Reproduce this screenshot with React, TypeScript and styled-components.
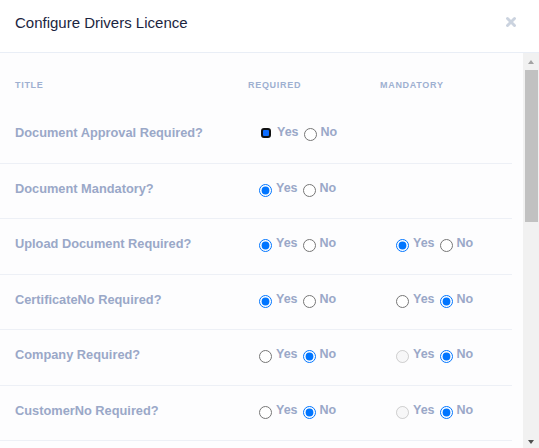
import { createGlobalStyle } from "styled-components";
import styled from "styled-components";
import { X } from "lucide-react";

const GlobalStyle = createGlobalStyle`
  html, body {
    margin: 0;
    padding: 0;
    background: #ffffff;
    font-family: "Liberation Sans", Arial, sans-serif;
  }
`;

const Modal = styled.div`
  height: 448px;
  display: flex;
  flex-direction: column;
  background: #fff;
`;

const Header = styled.div`
  height: 38px;
  flex-shrink: 0;
  display: flex;
  align-items: flex-start;
  justify-content: space-between;
  padding: 14px 21px 0 15px;
  border-bottom: 1px solid #e9eef6;
`;

const Title = styled.h2`
  margin: 0;
  font-size: 15px;
  font-weight: 500;
  color: #1b2540;
`;

const Close = styled.button`
  border: 0;
  background: none;
  padding: 0;
  margin-top: 1px;
  display: flex;
  color: #cbd3df;
  cursor: pointer;
`;

const Body = styled.div`
  flex: 1;
  min-height: 0;
  display: flex;
`;

const ScrollArea = styled.div`
  flex: 1;
  overflow-y: auto;
  scrollbar-width: none;
  background: #fdfdfe;
  padding-bottom: 16px;

  &::-webkit-scrollbar {
    display: none;
  }
`;

const ScrollTrack = styled.div`
  width: 16px;
  flex-shrink: 0;
  display: flex;
  flex-direction: column;
  background: #f1f1f1;
`;

const ScrollButton = styled.div<{ $down?: boolean }>`
  height: 17px;
  flex-shrink: 0;
  display: flex;
  justify-content: center;
  align-items: ${(p) => (p.$down ? "flex-start" : "center")};
  padding-top: ${(p) => (p.$down ? "9px" : "0")};
  box-sizing: border-box;
  margin-top: ${(p) => (p.$down ? "auto" : "0")};
`;

const Arrow = styled.span<{ $down?: boolean }>`
  width: 0;
  height: 0;
  border-left: 3.5px solid transparent;
  border-right: 3.5px solid transparent;
  ${(p) =>
    p.$down
      ? "border-top: 4px solid #505050;"
      : "border-bottom: 4px solid #a3a3a3;"}
`;

const Thumb = styled.div`
  height: 152px;
  margin: 0 1px 0 2px;
  background: #c1c1c1;
`;

const Table = styled.div`
  margin-right: 11px;
`;

const Row = styled.div<{ $head?: boolean }>`
  display: grid;
  grid-template-columns: 233px 132px 1fr;
  padding-left: 15px;
  align-items: ${(p) => (p.$head ? "end" : "center")};
  height: ${(p) => (p.$head ? "55px" : "54.5px")};
  border-bottom: ${(p) => (p.$head ? "0" : "1px solid #edf0f6")};
`;

const HeadCell = styled.div`
  font-size: 9px;
  font-weight: 700;
  letter-spacing: 0.7px;
  color: #9eb0d1;
  padding-bottom: 18px;
`;

const Label = styled.div`
  font-size: 12.8px;
  font-weight: 700;
  color: #9aa8c8;
  margin-top: -5px;
`;

const Group = styled.div<{ $indent: number }>`
  display: flex;
  align-items: flex-start;
  margin-top: -4px;
  padding-left: ${(p) => p.$indent}px;
`;

const Option = styled.label`
  display: inline-flex;
  align-items: flex-start;
  font-size: 12.5px;
  font-weight: 700;
  color: #9aa8c8;
  margin-right: 2px;
`;

const Radio = styled.input<{ $focused?: boolean }>`
  width: 13px;
  height: 13px;
  margin: 3px 4px 0 3px;
  ${(p) =>
    p.$focused &&
    `
    appearance: none;
    width: 10px;
    height: 10px;
    box-sizing: border-box;
    margin: 3px 6px 0 5px;
    border: 2px solid #111;
    border-radius: 3px;
    background: #0b6cff;
    outline: none;
  `}
`;

type Choice = "yes" | "no" | null;

interface IField {
  title: string;
  required: Choice;
  mandatory?: Choice;
  mandatoryLocked?: boolean;
  focused?: boolean;
}

const fields: IField[] = [
  { title: "Document Approval Required?", required: "yes", focused: true },
  { title: "Document Mandatory?", required: "yes" },
  { title: "Upload Document Required?", required: "yes", mandatory: "yes" },
  { title: "CertificateNo Required?", required: "yes", mandatory: "no" },
  { title: "Company Required?", required: "no", mandatory: "no", mandatoryLocked: true },
  { title: "CustomerNo Required?", required: "no", mandatory: "no", mandatoryLocked: true },
  { title: "ExpiryDate Required?", required: "no", mandatory: "no", mandatoryLocked: true },
  { title: "IssueDate Required?", required: "no", mandatory: "no", mandatoryLocked: true },
  { title: "IssuingCountry Required?", required: "no", mandatory: "no", mandatoryLocked: true },
  { title: "LicenceClass Required?", required: "no", mandatory: "no", mandatoryLocked: true },
  { title: "LicenceNo Required?", required: "yes", mandatory: "no" },
  { title: "Notes Required?", required: "no", mandatory: "no", mandatoryLocked: true },
  { title: "Reference Required?", required: "no", mandatory: "no", mandatoryLocked: true },
  { title: "Status Required?", required: "no", mandatory: "no", mandatoryLocked: true },
  { title: "ValidFrom Required?", required: "no", mandatory: "no", mandatoryLocked: true },
  { title: "ValidTo Required?", required: "no", mandatory: "no", mandatoryLocked: true },
];

const YesNo = ({
  name,
  value,
  indent,
  lockYes,
  focused,
}: {
  name: string;
  value: Choice;
  indent: number;
  lockYes?: boolean;
  focused?: boolean;
}) => (
  <Group $indent={indent}>
    <Option>
      <Radio
        type="radio"
        name={name}
        defaultChecked={value === "yes"}
        disabled={lockYes}
        $focused={focused}
      />
      Yes
    </Option>
    <Option>
      <Radio type="radio" name={name} defaultChecked={value === "no"} />
      No
    </Option>
  </Group>
);

const App = () => {
  return (
    <>
      <GlobalStyle />
      <Modal>
        <Header>
          <Title>Configure Drivers Licence</Title>
          <Close aria-label="Close">
            <X size={14} strokeWidth={5} />
          </Close>
        </Header>
        <Body>
          <ScrollArea>
            <Table>
              <Row $head>
                <HeadCell>TITLE</HeadCell>
                <HeadCell>REQUIRED</HeadCell>
                <HeadCell>MANDATORY</HeadCell>
              </Row>
              {fields.map((field, i) => (
                <Row key={field.title}>
                  <Label>{field.title}</Label>
                  <YesNo
                    name={`req-${i}`}
                    value={field.required}
                    indent={8}
                    focused={field.focused}
                  />
                  {field.mandatory !== undefined ? (
                    <YesNo
                      name={`man-${i}`}
                      value={field.mandatory}
                      indent={13}
                      lockYes={field.mandatoryLocked}
                    />
                  ) : (
                    <div />
                  )}
                </Row>
              ))}
            </Table>
          </ScrollArea>
          <ScrollTrack>
            <ScrollButton>
              <Arrow />
            </ScrollButton>
            <Thumb />
            <ScrollButton $down>
              <Arrow $down />
            </ScrollButton>
          </ScrollTrack>
        </Body>
      </Modal>
    </>
  );
};

export default App;
